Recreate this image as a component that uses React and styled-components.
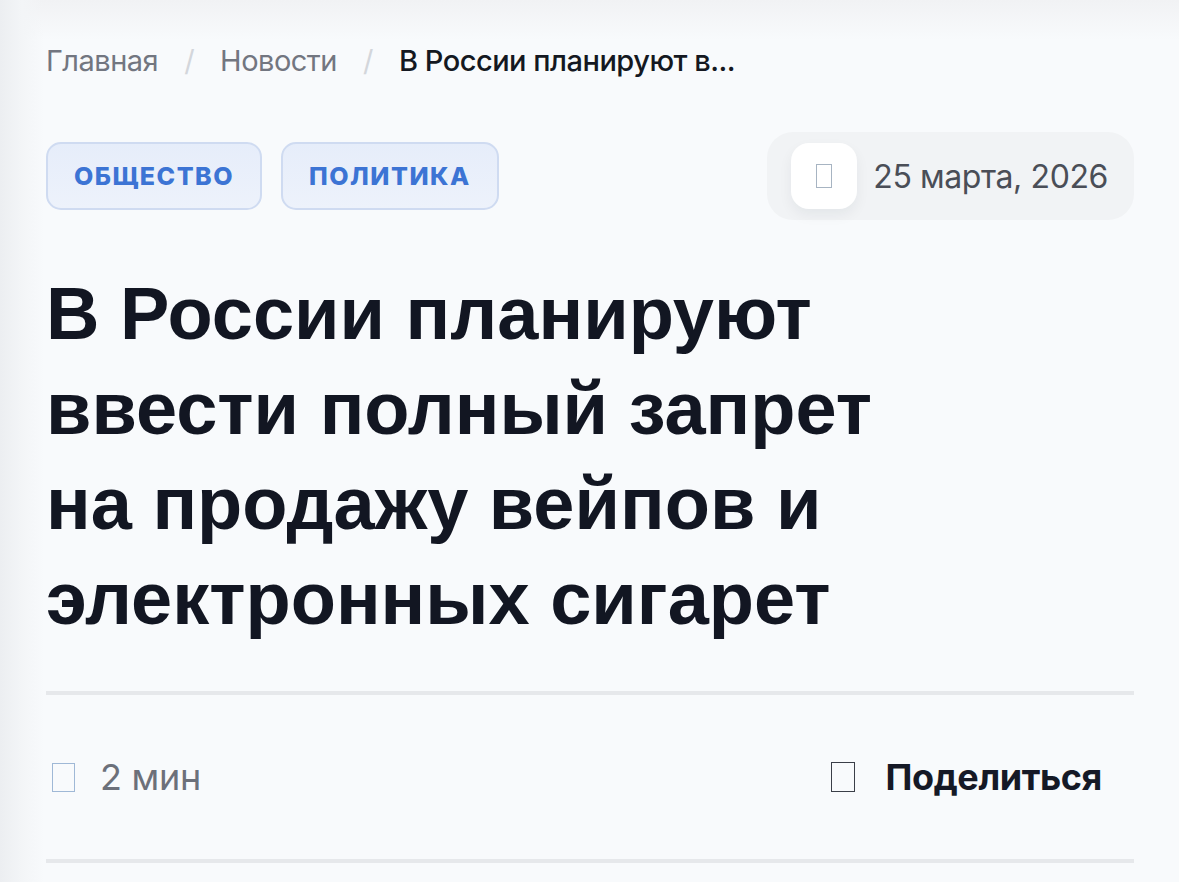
import styled, { createGlobalStyle } from 'styled-components';

const GlobalStyle = createGlobalStyle`
  * { box-sizing: border-box; }
  html, body { margin: 0; padding: 0; }
  body {
    min-height: 882px;
    font-family: Inter, "Noto Sans", sans-serif;
    background:
      linear-gradient(90deg, #eceef1 0px, #f3f5f7 22px, rgba(248, 250, 252, 0) 44px),
      linear-gradient(180deg, #f1f2f4 0px, rgba(248, 250, 252, 0) 40px),
      #f8fafc;
  }
`;

const Page = styled.article`
  padding: 43px 45px 0 46px;
`;

const Breadcrumbs = styled.nav`
  display: flex;
  align-items: center;
  gap: 26px;
  font-size: 29px;
  line-height: 36px;
  letter-spacing: -0.5px;
`;

const Crumb = styled.span`
  color: ${p => (p.$current ? '#141821' : '#727680')};
  font-weight: ${p => (p.$current ? 500 : 400)};
`;

const Slash = styled.span`
  color: #d3d6db;
`;

const MetaTop = styled.div`
  margin-top: 53px;
  display: flex;
  align-items: center;
  justify-content: space-between;
  height: 88px;
`;

const Tags = styled.div`
  display: flex;
  gap: 19px;
`;

const Tag = styled.span`
  display: inline-flex;
  align-items: center;
  height: 68px;
  padding: 0 26px;
  border-radius: 15px;
  border: 2px solid #cfdbf1;
  background: linear-gradient(180deg, #e6edfa 0%, #edf2fb 100%);
  color: #3c74d4;
  font-size: 25px;
  font-weight: 800;
  letter-spacing: 1.5px;
  text-transform: uppercase;
`;

const DatePill = styled.div`
  display: flex;
  align-items: center;
  gap: 16px;
  height: 88px;
  padding: 0 26px 0 24px;
  border-radius: 26px;
  background: #f1f3f5;
`;

const IconTile = styled.div`
  width: 66px;
  height: 66px;
  border-radius: 18px;
  background: #ffffff;
  box-shadow: 0 6px 14px rgba(20, 30, 50, 0.06);
  display: flex;
  align-items: center;
  justify-content: center;
`;

const Tofu = styled.span`
  display: inline-block;
  width: ${p => p.$w || 16}px;
  height: ${p => p.$h || 24}px;
  border: 1.5px solid ${p => p.$color || '#a9b3c0'};
  flex-shrink: 0;
`;

const DateText = styled.span`
  font-size: 32px;
  color: #4a4e57;
  letter-spacing: -0.4px;
`;

const Title = styled.h1`
  margin: 46px 0 0;
  font-family: "Liberation Sans", Arial, sans-serif;
  font-size: 74px;
  line-height: 95px;
  font-weight: 700;
  letter-spacing: 0;
  color: #121622;
  max-width: 900px;
`;

const Divider = styled.hr`
  margin: 0;
  border: none;
  height: 4px;
  background: #e6e8eb;
`;

const TopDivider = styled(Divider)`
  margin-top: 45px;
`;

const MetaBottom = styled.div`
  height: 164px;
  display: flex;
  align-items: center;
  justify-content: space-between;
`;

const ReadTime = styled.div`
  display: flex;
  align-items: center;
  gap: 25px;
  padding-left: 6px;
  font-size: 36px;
  letter-spacing: -0.3px;
  color: #6c707a;
`;

const ShareButton = styled.button`
  display: flex;
  align-items: center;
  gap: 31px;
  border: none;
  background: transparent;
  padding: 0 32px 0 0;
  font-family: Inter, "Noto Sans", sans-serif;
  font-size: 36px;
  font-weight: 700;
  letter-spacing: -0.4px;
  color: #151926;
  cursor: pointer;
`;

export default function App() {
  return (
    <>
      <GlobalStyle />
      <Page>
        <Breadcrumbs>
          <Crumb>Главная</Crumb>
          <Slash>/</Slash>
          <Crumb>Новости</Crumb>
          <Slash>/</Slash>
          <Crumb $current>В России планируют в...</Crumb>
        </Breadcrumbs>

        <MetaTop>
          <Tags>
            <Tag>Общество</Tag>
            <Tag>Политика</Tag>
          </Tags>
          <DatePill>
            <IconTile>
              <Tofu $w={16} $h={24} $color="#a7b4c2" />
            </IconTile>
            <DateText>25 марта, 2026</DateText>
          </DatePill>
        </MetaTop>

        <Title>
          В России планируют ввести полный запрет на продажу вейпов и электронных сигарет
        </Title>

        <TopDivider />
        <MetaBottom>
          <ReadTime>
            <Tofu $w={23} $h={29} $color="#9fb8d6" />
            2 мин
          </ReadTime>
          <ShareButton>
            <Tofu $w={24} $h={30} $color="#3a3e48" />
            Поделиться
          </ShareButton>
        </MetaBottom>
        <Divider />
      </Page>
    </>
  );
}
